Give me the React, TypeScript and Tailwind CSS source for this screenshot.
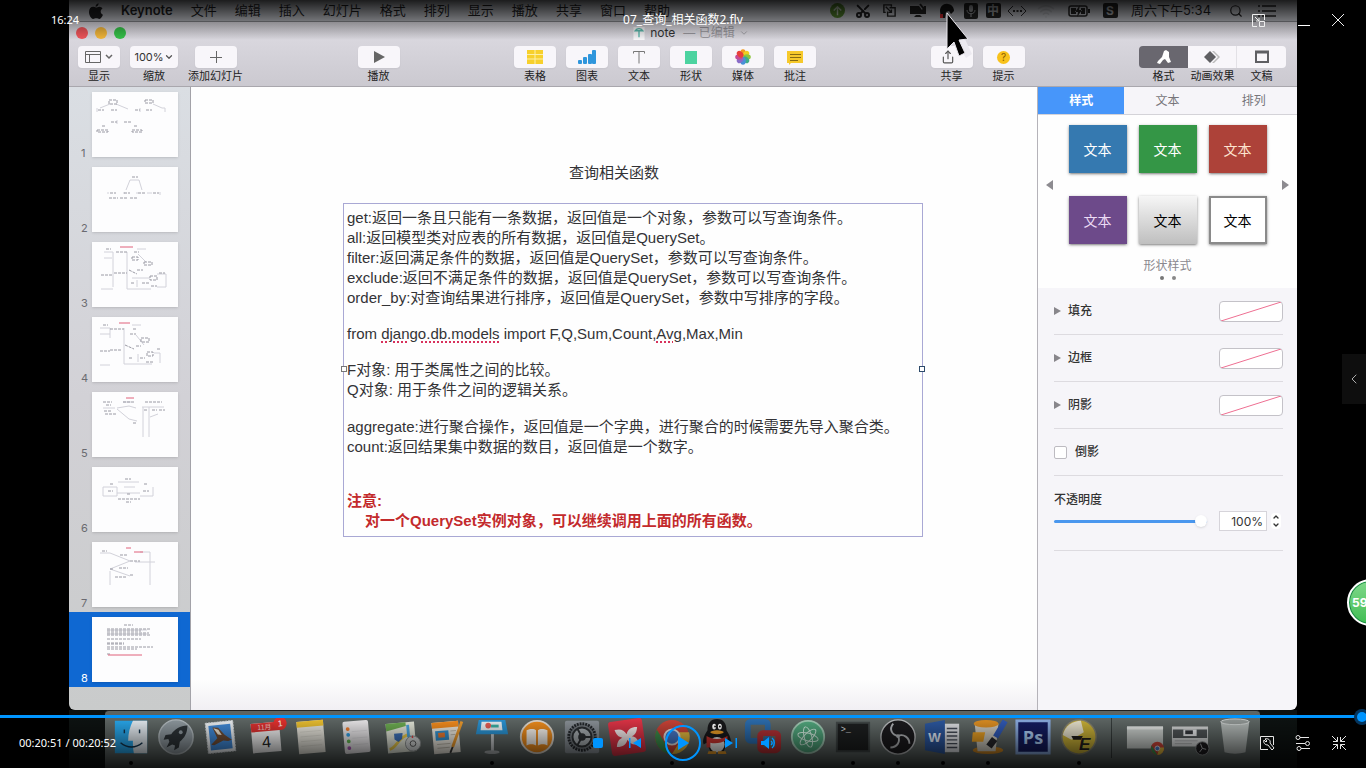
import type { ReactNode } from 'react'
import { ChevronDown, ChevronLeft, ChevronUp, Scissors, Search, Share, Wifi, X } from 'lucide-react'

const menus = ['文件', '编辑', '插入', '幻灯片', '格式', '排列', '显示', '播放', '共享', '窗口', '帮助']

const thumbs = [
  {
    ink: 'M17 8h8v4h-8zM53 8h8v3h-8zM6 18h6M19 18h6M43 18h5M54 18h6M19 30h6M32 30h7M10 34h3M42 34h3M5 38h11v2H5zM40 38h10v2H40z',
    lines: 'M18 12L8 16M24 12L36 17M61 12l9 4h3v4M5 16v4M48 16v4M25 28v4',
    red: '',
  },
  {
    ink: 'M40 10h6M18 26h6M32 26h6M46 26h7M61 26h6M17 31h9M28 31h8M38 31h8',
    lines: 'M38 13h9M38 13l-4 10M47 13l3 10M16 25v2M32 25v2M45 25v2M55 26h5M68 25v3',
    red: '',
  },
  {
    ink: 'M14 7h5M24 10h11M42 10h5M40 15h6v3h-6zM52 20h8v3h-8zM9 33h12M22 31h13M37 28l8 4M45 28h6M58 34h7v4h-7zM67 31h6M39 41h4M50 41h7M59 44h6',
    lines: 'M12 10h9v35M12 16h8M35 10v37h24M45 7h9M46 12l8 8M40 36h18M45 38v7M65 32h9v13h-9M9 47h12',
    red: 'M28 5h13',
  },
  {
    ink: 'M11 8h5M18 12h14M41 12h4M38 17h6M49 21h8v4h-8zM8 34h10M18 33h12M33 28l9 4M44 29h5M55 35h6v4h-6zM65 32h4M37 41h3M48 41h5M54 45h7',
    lines: 'M8 11h10v10M8 17h10M32 11v36h28M40 8h9M44 18l8 10M46 37v8M62 36h6v10M8 48h10',
    red: 'M27 6h11',
  },
  {
    ink: 'M11 10h9M31 10h11M53 10h17M14 13h5M12 19h7M13 22h12M52 18h4M60 18h5M67 18h6M41 31h3',
    lines: 'M11 16h12M31 10h8M25 17l12 10 8 2M25 16l12-2 7 2M50 15h22M51 15v30M57 15v30M58 25l8-3',
    red: 'M34 6h8',
  },
  {
    ink: 'M33 12h6M18 17h3M52 17h3M16 24h5M51 24h6M35 27h4M26 32h22M34 35h5',
    lines: 'M11 20h14v9H11zM26 15h21M32 20h11M25 26h23M48 29h13V20',
    red: '',
  },
  {
    ink: 'M10 9h5M28 13h7M42 19h6M27 26h9M23 35h11M38 19h3M38 33h3M18 27h3',
    lines: 'M8 11h10l20 8-20 8 20 7M48 10h10v33M43 20h20M18 29v14',
    red: 'M34 6h5M42 10h9',
  },
  {
    ink: 'M32 8h9M15 12h43M15 14h34M15 16h42M15 18h43M15 22h34M15 26h17M15 27h17M15 30h46M15 32h30M15 37h3',
    lines: 'M15 13h40M15 17h40',
    red: 'M16 38h34',
  },
]

const insertTools: { label: string; icon: ReactNode }[] = [
  {
    label: '表格',
    icon: (
      <svg viewBox="0 0 20 16" className="h-4 w-5">
        <path fill="#f7d02c" d="M2 1h16v14H2z" />
        <path stroke="#fdf0a8" d="M2 5.5h16M2 10h16M10 1v14" />
      </svg>
    ),
  },
  {
    label: '图表',
    icon: (
      <svg viewBox="0 0 20 16" className="h-4 w-5" fill="#2f96dc">
        <rect x="1" y="11" width="4" height="4" rx="1" />
        <rect x="6" y="8" width="4" height="7" rx="1" />
        <rect x="11" y="5" width="4" height="10" rx="1" />
        <rect x="15" y="1" width="4" height="14" rx="1" />
      </svg>
    ),
  },
  {
    label: '文本',
    icon: (
      <svg viewBox="0 0 20 16" className="h-4 w-5" fill="none" stroke="#777">
        <path d="M4.500 4.500V2.500h11v2M10 2.500v12" />
      </svg>
    ),
  },
  {
    label: '形状',
    icon: (
      <svg viewBox="0 0 20 16" className="h-4 w-5">
        <path fill="#4cd3a0" d="M4 2h12v13H4z" />
      </svg>
    ),
  },
  {
    label: '媒体',
    icon: (
      <svg viewBox="-8 -8 16 16" className="size-4">
        {['#f29a1f', '#f0d020', '#8fc640', '#3fae8a', '#4a90d9', '#8a6cc8', '#c74a94', '#e8403a'].map((c, i) => (
          <ellipse key={c} cx="0" cy="-4" rx="2.800" ry="3.800" fill={c} transform={`rotate(${i * 45})`} />
        ))}
      </svg>
    ),
  },
  {
    label: '批注',
    icon: (
      <svg viewBox="0 0 20 16" className="h-4 w-5">
        <path fill="#f6c92c" d="M2 2h16v12H6l-2 2v-2H2z" />
        <path stroke="#866a14" d="M5 5.500h11M5 8.500h11M5 11.500h8" />
      </svg>
    ),
  },
]

const swatches = [
  'bg-[#3579b0] text-white',
  'bg-[#349646] text-white',
  'bg-[#ad4239] text-[#fde4d0]',
  'bg-[#6d4a8a] text-[#ecdcf4]',
  'bg-linear-to-b from-[#f6f6f6] to-[#bfbfbf] text-black',
  'border-2 border-[#8a8a8a] bg-white text-black',
]

const dockApps: { name: string; running?: boolean; art: ReactNode }[] = [
  {
    name: 'Finder',
    running: true,
    art: (
      <>
        <path fill="#27a3e6" d="M3 3h34v34H3z" />
        <path fill="#dfe6ec" d="M22 3h15v34H23c-1-5-1-9-1-13h-5c0-8 2-15 5-21z" />
        <path d="M13 12v4M29 12v4M9 26c7 6 16 6 23 0" fill="none" stroke="#13324a" strokeWidth="1.500" />
      </>
    ),
  },
  {
    name: 'Launchpad',
    art: (
      <>
        <circle cx="20" cy="20" r="18" fill="#8b959b" stroke="#aeb6ba" strokeWidth="1.500" />
        <path fill="#2c3236" d="M32 8c-8 0-13 4-17 9l-6 1-2 5 5-1 1 3-3 6 6-3 3 1-1 5 5-3 1-6c5-4 8-9 8-17z" />
        <circle cx="25" cy="15" r="2" fill="#8b959b" />
      </>
    ),
  },
  {
    name: 'Mail',
    art: (
      <g transform="rotate(-6 20 20)">
        <path fill="#e9edf0" stroke="#d0d4d6" strokeDasharray="2 1" d="M5 4h29v32H5z" />
        <path fill="#3f86d2" d="M8 7h23v26H8z" />
        <path fill="#6d4b33" d="M12 9l6 1 6 8 7 6-4 1-5-1-10 4-3-1 7-6z" />
        <path fill="#eee3d0" d="M13 10l5 2 3 6-4-1z" />
      </g>
    ),
  },
  {
    name: 'Calendar',
    art: (
      <g transform="rotate(-5 20 20)">
        <path fill="#ececec" d="M5 5h30v31H5z" />
        <path fill="#d8302f" d="M5 5h30v9H5z" />
        <text x="20" y="31" textAnchor="middle" fontSize="17" fill="#222" fontFamily="Liberation Sans">4</text>
        <text x="19" y="12" textAnchor="middle" fontSize="7" fill="#f6c9c4" fontFamily="Noto Sans CJK SC">11月</text>
        <circle cx="36" cy="7" r="7" fill="#e0302c" />
        <text x="36" y="10" textAnchor="middle" fontSize="9" fill="#fff" fontFamily="Liberation Sans">1</text>
      </g>
    ),
  },
  {
    name: 'Notes',
    art: (
      <g transform="rotate(-5 20 20)">
        <path fill="#e3e1d8" d="M6 3h28v34H6z" />
        <path fill="#e7bd2f" d="M6 3h28v6H6z" />
        <path stroke="#d3d1c8" d="M9 14h22M9 19h22M9 24h22M9 29h22" />
      </g>
    ),
  },
  {
    name: 'Reminders',
    art: (
      <g transform="rotate(-5 20 20)">
        <rect x="7" y="3" width="27" height="34" rx="2" fill="#e6e4e6" />
        <circle cx="12" cy="11" r="2" fill="#ee7a2c" />
        <circle cx="12" cy="17" r="2" fill="#2f9be0" />
        <circle cx="12" cy="24" r="2" fill="#5fb04e" />
        <circle cx="12" cy="31" r="2" fill="#a855b0" />
        <path stroke="#d8d6d9" d="M16 14h16M16 21h16M16 28h16" />
      </g>
    ),
  },
  {
    name: 'Maps',
    art: (
      <g transform="rotate(-5 20 20)">
        <path fill="#dfe2d5" d="M5 5h30v31H5z" />
        <path fill="#6aa84f" d="M5 5h21v4L5 13z" />
        <path fill="none" stroke="#e8c84a" strokeWidth="3" d="M7 32c8-1 10-13 22-14" />
        <path fill="none" stroke="#4aa3dc" strokeWidth="3" d="M28 8v12l6 3" />
        <path fill="#3c6fb6" d="M13 16h9l-1 6-4 3-4-3z" />
        <circle cx="32" cy="28" r="8" fill="#cfd2d2" stroke="#8b8f8f" />
        <circle cx="32" cy="28" r="3" fill="none" stroke="#555" />
        <path fill="#d33" d="M31 22l1-3 1 3z" />
      </g>
    ),
  },
  {
    name: 'Pages',
    art: (
      <g transform="rotate(-5 20 20)">
        <path fill="#e8e4da" d="M5 4h28v33H5z" />
        <path fill="#f08a1d" d="M5 4h28v6H5z" />
        <path fill="#3490cc" d="M8 13h14v10H8z" />
        <path fill="#e8772e" d="M11 15h7v5h-7z" />
        <path stroke="#b9b4a8" d="M24 14h6M24 18h5M9 27h14M9 31h13" />
        <path stroke="#e8972b" strokeWidth="3" d="M37 5L25 31" />
        <path stroke="#333" strokeWidth="2" d="M25 31l-3 6" />
      </g>
    ),
  },
  {
    name: 'Keynote',
    running: true,
    art: (
      <>
        <path fill="#2990cf" d="M6 2h28l3 15H3z" />
        <path fill="#e9eef1" d="M9 4h21l1 9H8z" />
        <circle cx="16" cy="8" r="3" fill="#e05a50" />
        <path fill="#3aaca0" d="M19 7h8v3h-8z" />
        <path fill="#c2c6c8" d="M19 17h3v18h-3z" />
        <ellipse cx="20" cy="36" rx="8" ry="2" fill="#a9adaf" />
      </>
    ),
  },
  {
    name: 'iBooks',
    art: (
      <>
        <circle cx="20" cy="20" r="17" fill="#ea8a1c" stroke="#dcd5cb" strokeWidth="2" />
        <path fill="#f3efe9" d="M9 13c4-2 8-2 10 0v16c-3-2-7-2-10 0zM31 13c-4-2-8-2-10 0v16c3-2 7-2 10 0z" />
      </>
    ),
  },
  {
    name: '系统偏好设置',
    art: (
      <>
        <rect x="2" y="3" width="36" height="34" rx="2" fill="#878e94" />
        <circle cx="20" cy="20" r="14" fill="#6b7176" stroke="#22262a" strokeWidth="3" strokeDasharray="2 1" />
        <circle cx="20" cy="20" r="10" fill="#a1a7ab" stroke="#2a2e31" strokeWidth="2" />
        <path stroke="#2a2e31" strokeWidth="2" d="M20 20h10M20 20l-5-9M20 20l-5 9" />
        <circle cx="20" cy="20" r="4" fill="#2a2e31" />
      </>
    ),
  },
  {
    name: 'XMind',
    art: (
      <g transform="rotate(-8 20 20)">
        <rect x="2" y="2" width="36" height="36" rx="3" fill="#dc3345" />
        <path fill="#f4e9ea" d="M8 11c6-1 10 1 12 6 2-5 6-7 12-6-1 5-3 8-7 9 4 1 6 4 7 9-6 1-10-1-12-6-2 5-6 7-12 6 1-5 3-8 7-9-4-1-6-4-7-9z" />
        <circle cx="20" cy="20" r="3" fill="#f4e9ea" />
      </g>
    ),
  },
  {
    name: 'Chrome',
    running: true,
    art: (
      <>
        <circle cx="20" cy="20" r="18" fill="#c64236" />
        <path fill="#3c8a4a" d="M4 12l10 17 6 9A18 18 0 0 1 4 12z" />
        <path fill="#dcb43c" d="M38 15H24l4 10-8 13a18 18 0 0 0 18-23z" />
        <circle cx="20" cy="20" r="8" fill="#4575c4" stroke="#ddd" strokeWidth="2" />
      </>
    ),
  },
  {
    name: 'QQ',
    art: (
      <>
        <path fill="#17181a" d="M20 1c7 0 10 5 10 12 3 5 6 10 4 15l-3-2-4 9H13l-4-9-3 2c-2-5 1-10 4-15 0-7 3-12 10-12z" />
        <ellipse cx="20" cy="28" rx="8" ry="8" fill="#e4e4e2" />
        <path fill="#c8342f" d="M9 19c7 4 15 4 22 0v4c-7 4-14 4-18 3v5h-4z" />
        <ellipse cx="17" cy="9" rx="2" ry="3" fill="#fff" />
        <ellipse cx="23" cy="9" rx="2" ry="3" fill="#fff" />
        <circle cx="18" cy="9" r="1" fill="#111" />
        <circle cx="23" cy="9" r="1" fill="#111" />
        <ellipse cx="20" cy="15" rx="7" ry="2" fill="#e99b25" />
        <path fill="#e99b25" d="M11 35h8v3h-9zM21 35h8l1 3h-9z" />
      </>
    ),
  },
  {
    name: 'VMware Fusion',
    running: true,
    art: (
      <>
        <rect x="4" y="4" width="21" height="20" rx="3" fill="none" stroke="#2b6bab" strokeWidth="6" />
        <rect x="17" y="16" width="19" height="18" rx="3" fill="none" stroke="#b02f33" strokeWidth="6" />
      </>
    ),
  },
  {
    name: 'Atom',
    art: (
      <>
        <circle cx="20" cy="20" r="17" fill="#4fa37a" stroke="#9fc7b2" strokeWidth="2" />
        <g fill="none" stroke="#cfe9dc">
          <ellipse cx="20" cy="20" rx="11" ry="4" transform="rotate(15 20 20)" />
          <ellipse cx="20" cy="20" rx="11" ry="4" transform="rotate(75 20 20)" />
          <ellipse cx="20" cy="20" rx="11" ry="4" transform="rotate(135 20 20)" />
        </g>
      </>
    ),
  },
  {
    name: '终端',
    running: true,
    art: (
      <>
        <path fill="#1c1e1f" stroke="#3f4545" strokeWidth="2" d="M3 5h34v30H3z" />
        <text x="7" y="15" fontSize="9" fill="#dedede" fontFamily="Liberation Mono">&gt;_</text>
      </>
    ),
  },
  {
    name: 'OBS',
    running: true,
    art: (
      <>
        <circle cx="20" cy="20" r="18" fill="#1b1a1d" stroke="#b6b8ba" strokeWidth="1.500" />
        <path
          fill="none"
          stroke="#aeb0b3"
          strokeWidth="2"
          d="M15 6c-5 6-1 12 5 13M20 19c6-3 12 2 12 8M20 19c3 6-1 12-8 12"
        />
        <circle cx="20" cy="19" r="2" fill="#aeb0b3" />
      </>
    ),
  },
  {
    name: 'Word',
    running: true,
    art: (
      <>
        <path fill="#d8dade" d="M20 6h17v30H20z" />
        <path stroke="#444a55" strokeWidth="1.500" d="M24 11h11M24 15h11M24 19h11M24 23h11M24 27h11M24 31h11" />
        <path fill="#2b559b" d="M1 6l21-4v36L1 34z" />
        <text x="11" y="25" textAnchor="middle" fontSize="14" fontWeight="700" fill="#dfe7f4" fontFamily="Liberation Sans">W</text>
      </>
    ),
  },
  {
    name: 'Paintbrush',
    running: true,
    art: (
      <>
        <ellipse cx="20" cy="34" rx="16" ry="4" fill="#c98422" />
        <path fill="#c9c5ba" d="M6 6h25l-3 29H9z" />
        <ellipse cx="18" cy="6" rx="13" ry="4" fill="#d98c22" />
        <path fill="#e39b22" d="M4 15h13l-2 10H3z" />
        <path stroke="#2f57b0" strokeWidth="6" d="M38 3L28 20" />
        <path stroke="#26262a" strokeWidth="7" d="M27 22l-6 8" />
      </>
    ),
  },
  {
    name: 'Photoshop',
    art: (
      <>
        <path fill="#131b5c" stroke="#87a8dc" strokeWidth="3" d="M3 3h34v34H3z" />
        <text x="20" y="27" textAnchor="middle" fontSize="19" fontWeight="700" fill="#a9c8ee" fontFamily="Open Sans">Ps</text>
      </>
    ),
  },
  {
    name: 'UltraEdit',
    running: true,
    art: (
      <>
        <circle cx="20" cy="20" r="18" fill="#c3ab35" stroke="#7f7c6a" strokeWidth="1.500" />
        <path fill="#e2ddc8" d="M3 18C5 8 14 3 22 3l3 12-13 8z" />
        <path fill="#1e1c1a" d="M12 19h12l-2 4h-8z" />
        <text x="26" y="34" textAnchor="middle" fontSize="18" fontWeight="700" fontStyle="italic" fill="#211d1b" fontFamily="Liberation Sans">E</text>
      </>
    ),
  },
]

const dockWindows: { name: string; art: ReactNode }[] = [
  {
    name: 'Chrome 窗口',
    art: (
      <>
        <path fill="#c3c8c5" d="M1 9h38v23H1z" />
        <path fill="#e0e3e1" d="M1 9h38v3H1z" />
        <circle cx="33" cy="32" r="7" fill="#c64236" />
        <path fill="#dcb43c" d="M40 31h-5l-2 8a7 7 0 0 0 7-8z" />
        <path fill="#3c8a4a" d="M27 29l6 10a7 7 0 0 1-6-10z" />
        <circle cx="33" cy="32" r="2.500" fill="#4575c4" stroke="#ddd" />
      </>
    ),
  },
  {
    name: 'OBS 窗口',
    art: (
      <>
        <path fill="#cdd0d0" d="M1 9h38v21H1z" />
        <path fill="#4d5254" d="M2 12h36v9H2z" />
        <path fill="#e1e3e5" d="M13 12h14v7H13z" />
        <path fill="#33363a" d="M15 13h8v4h-8z" />
        <path stroke="#a5a8a9" d="M4 24h24M4 27h18" />
        <circle cx="33" cy="32" r="7" fill="#1b1a1d" stroke="#85888a" />
        <path stroke="#aeb0b3" d="M31 27l2 5 4 1M33 32l-3 4" fill="none" />
      </>
    ),
  },
  {
    name: '废纸篓',
    art: (
      <>
        <path fill="#a9afad" d="M5 4h30l-4 32c-6 2-16 2-22 0z" />
        <ellipse cx="20" cy="4" rx="15" ry="3" fill="#8d9391" stroke="#c7cbca" />
      </>
    ),
  },
]

function ToolButton({ label, wide, children }: { label: string; wide?: boolean; children: ReactNode }) {
  return (
    <button className="flex flex-col items-center text-[11px] leading-4 text-[#222]">
      <span
        className={`flex h-[22px] items-center justify-center rounded bg-[#f8f6fa] text-[#555] shadow-xs ${
          wide ? 'w-12' : 'w-[42px]'
        }`}
      >
        {children}
      </span>
      {label}
    </button>
  )
}

function MenuBar() {
  return (
    <header className="flex h-[22px] shrink-0 items-center justify-between border-b border-[#85878c] bg-[#b9bbc1] pr-[17px] pl-5 text-[13px] whitespace-nowrap text-[#1c1c1e]">
      <nav className="flex items-center gap-[18px]">
        <svg viewBox="0 0 16 18" className="h-4 w-[14px]" fill="#1c1c1e">
          <path d="M11 0c0 2-1.500 4-3.500 4C7.300 2 9 .3 11 0zM8 5c1 0 2-1 4-1 1.500 0 2.700.8 3.400 2-3 1.700-2.500 6 .6 7.200C15 15.500 13.500 18 12 18c-1.500 0-2-.8-3.700-.8S6 18 4.700 18C2.500 18 0 13.500 0 10c0-3.600 2.200-5.800 4.500-5.800C6 4.200 7.200 5 8 5z" />
        </svg>
        <strong className="font-semibold">Keynote</strong>
        {menus.map((m) => (
          <a key={m} href="#">
            {m}
          </a>
        ))}
      </nav>
      <div className="flex items-center [&>span]:flex [&>span]:justify-center">
        <span className="w-[26px]">
          <svg viewBox="0 0 16 16" className="size-[15px]">
            <circle cx="8" cy="8" r="8" fill="#4d7a2a" />
            <path d="M8 13V4M4 8l4-4 4 4" fill="none" stroke="#b4bfae" strokeWidth="1.500" />
          </svg>
        </span>
        <span className="w-[26px]">
          <Scissors size={16} strokeWidth={3} className="-rotate-90" />
        </span>
        <span className="w-[26px]">
          <svg viewBox="0 0 16 16" className="size-[15px]" fill="none" stroke="#222" strokeWidth="1.500">
            <path d="M10 4V2H2v8h2M8 5h6v9H6V9M4 4l6 6M10 7v3H7" />
          </svg>
        </span>
        <span className="w-8">
          <svg viewBox="0 0 18 16" className="h-4 w-[18px]" fill="#222">
            <path d="M1 3h9l3 4 2-4h2v8H1zM7 12h4l2 2H5z" />
            <path d="M11 1l4 5" stroke="#222" strokeWidth="2" />
          </svg>
        </span>
        <span className="w-[26px]">
          <svg viewBox="0 0 16 16" className="size-4" fill="#161616">
            <path d="M1 8c0-5 4-8 8-7 4 0 6 4 6 7l-3 3-2-3-3 1-1 6H2z" />
            <path fill="#c8282c" d="M1 11h3v4H1z" />
          </svg>
        </span>
        <span className="w-[22px]">
          <svg viewBox="0 0 16 16" className="size-4">
            <rect x="1" width="14" height="16" rx="2" fill="#222" />
            <rect x="6" y="2" width="4" height="7" rx="2" fill="#a5a7ab" />
            <path d="M4 7c0 5 8 5 8 0M8 11v3" fill="none" stroke="#a5a7ab" />
          </svg>
        </span>
        <span className="w-[22px]">
          <span className="w-[15px] rounded-xs bg-[#222] text-center text-[12px] leading-[15px] font-bold text-[#a5a7ab]">中</span>
        </span>
        <span className="w-[26px]">
          <svg viewBox="0 0 20 14" className="h-[14px] w-5" fill="none" stroke="#2a2a2c">
            <path d="M6 2L1 7l5 5M14 2l5 5-5 5" />
            <path d="M6 7h9" strokeWidth="2" strokeDasharray="2 1.500" />
          </svg>
        </span>
        <span className="w-8 opacity-10">
          <Wifi size={18} />
        </span>
        <span className="w-[34px]">
          <svg viewBox="0 0 22 12" className="h-3 w-[22px]">
            <rect x="1" y="1" width="18" height="10" rx="2" fill="none" stroke="#222" strokeWidth="1.500" />
            <path d="M3 3h5v6H3zM13 3h4v6h-4zM20 4h2v4h-2zM12 0L7 7h3l-1 5 5-7h-3z" fill="#222" />
          </svg>
        </span>
        <span className="w-7">
          <span className="w-[15px] rounded-xs bg-[#222] text-center text-[12px] leading-[15px] font-bold text-[#a5a7ab]">S</span>
        </span>
        <span className="w-[94px]">周六下午5:34</span>
        <span className="w-9">
          <Search size={14} />
        </span>
        <span className="w-[26px]">
          <svg viewBox="0 0 18 12" className="h-3 w-[18px]" stroke="#222" strokeWidth="1.500">
            <path d="M0 1h2M4 1h14M0 6h2M4 6h14M0 11h2M4 11h14" />
          </svg>
        </span>
      </div>
    </header>
  )
}

function Toolbar() {
  return (
    <div className="shrink-0 border-b border-[#a9a7ad] bg-linear-to-b from-[#dedce3] to-[#cbc9d0]">
      <div className="relative flex h-[22px] items-center justify-center text-[12px] text-[#333]">
        <div className="absolute left-[7px] flex gap-[7px]">
          <button aria-label="关闭" className="size-3 rounded-full bg-[#f0555a]" />
          <button aria-label="最小化" className="size-3 rounded-full bg-[#f2b63a]" />
          <button aria-label="缩放" className="size-3 rounded-full bg-[#35c148]" />
        </div>
        <div className="flex items-center gap-1 pl-4">
          <svg viewBox="0 0 12 14" className="h-[13px] w-3">
            <path fill="#f5f5f7" d="M0 0h12v14H0z" />
            <path d="M2 4c2-3 6-3 8 0H2zM6 4v7" fill="none" stroke="#5bb8ac" strokeWidth="1.500" />
          </svg>
          <span className="pl-px">note</span>
          <span className="flex items-center pl-1 text-[#99979d]">
            — 已编辑 <ChevronDown size={10} className="ml-1" />
          </span>
        </div>
      </div>
      <div className="flex h-[42px] items-start justify-between pt-[2px] pr-[11px] pl-[9px] whitespace-nowrap">
        <div className="flex gap-[10px]">
          <ToolButton label="显示">
            <svg viewBox="0 0 28 14" className="h-[14px] w-7" fill="none" stroke="#666">
              <path d="M.5 1.500h15v11H.5zM.5 4.500h15M4.500 4.500v8" />
              <path d="M21 5l3 3 3-3" strokeWidth="1.500" />
            </svg>
          </ToolButton>
          <ToolButton label="缩放" wide>
            <span className="text-[11px] text-[#333]">100%</span>
            <ChevronDown size={10} strokeWidth={3} />
          </ToolButton>
          <ToolButton label="添加幻灯片">
            <svg viewBox="0 0 14 14" className="size-[14px]" stroke="#666">
              <path d="M1 7.500h12M7.500 1v12" />
            </svg>
          </ToolButton>
        </div>
        <ToolButton label="播放">
          <svg viewBox="0 0 12 12" className="size-3" fill="#666">
            <path d="M1 0l11 6-11 6z" />
          </svg>
        </ToolButton>
        <div className="flex gap-[10px]">
          {insertTools.map((t) => (
            <ToolButton key={t.label} label={t.label}>
              {t.icon}
            </ToolButton>
          ))}
        </div>
        <div className="flex gap-[10px]">
          <ToolButton label="共享">
            <Share size={14} strokeWidth={2} className="mr-2" />
          </ToolButton>
          <ToolButton label="提示">
            <span className="size-[13px] rounded-full bg-[#f8c21c] text-center text-[10px] leading-[13px] text-[#8a5c00]">?</span>
          </ToolButton>
        </div>
        <div className="flex text-center text-[11px] leading-4 text-[#222]">
          <button className="w-[49px]">
            <span className="flex h-[22px] items-center justify-center rounded-l bg-[#69676f]">
              <svg viewBox="0 0 16 16" className="size-4" fill="#fff">
                <path d="M8 2l2-1 3 2v5l2 5-3 1-3-4-2 1-3 4-3-1 1-2 4-4z" />
              </svg>
            </span>
            格式
          </button>
          <button className="w-[49px]">
            <span className="flex h-[22px] items-center justify-center border-r border-[#e3e1e6] bg-[#f8f6fa]">
              <svg viewBox="0 0 18 12" className="h-3 w-[18px]">
                <path d="M9 0h2l6 6-6 6H9l6-6z" fill="#bbb" />
                <path d="M7 0l6 6-6 6-6-6z" fill="#5f5f63" />
              </svg>
            </span>
            动画效果
          </button>
          <button className="w-[49px]">
            <span className="flex h-[22px] items-center justify-center rounded-r bg-[#f8f6fa]">
              <svg viewBox="0 0 16 14" className="h-[14px] w-4" fill="none" stroke="#5f5f63" strokeWidth="2">
                <path d="M2 2h12v10H2z" />
                <path d="M1 2h14" strokeWidth="3" />
              </svg>
            </span>
            文稿
          </button>
        </div>
      </div>
    </div>
  )
}

function Sidebar() {
  return (
    <aside className="w-[122px] shrink-0 overflow-hidden border-r border-[#a3a2a8] bg-linear-to-b from-[#dadee3] via-[#d2d1d6] to-[#c9cbcb]">
      <ol>
        {thumbs.map((t, i) => (
          <li
            key={i}
            className={`flex h-[75px] items-end gap-1 pb-1 pl-3 text-[11px] ${
              i === thumbs.length - 1 ? 'bg-[#0f68d2] text-white' : 'text-[#6a6a70]'
            }`}
          >
            <span className="w-[7px] leading-[9px]">{i + 1}</span>
            <svg viewBox="0 0 86 65" className="mb-px h-[65px] w-[86px] bg-[#fdfdfe] shadow-sm" fill="none">
              <path d={t.lines} stroke="#d2d2da" />
              <path d={t.ink} stroke="#9a9aa4" strokeDasharray="3 1" />
              <path d={t.red} stroke="#e0607a" />
            </svg>
          </li>
        ))}
      </ol>
    </aside>
  )
}

function Slide() {
  return (
    <main className="min-w-0 flex-1 bg-linear-to-b from-[#fefefe] from-95% to-[#f1eff3] pt-[76px] font-['Liberation_Sans','Noto_Sans_CJK_SC',sans-serif] text-[15px] leading-5 text-[#333336]">
      <div className="mx-auto w-[618px]">
        <h1 className="text-center">查询相关函数</h1>
        <div className="relative mt-5 ml-[38px] border border-[#a9a8d4] px-[3px] pt-1 pb-[5px] whitespace-nowrap">
          <p>get:返回一条且只能有一条数据，返回值是一个对象，参数可以写查询条件。</p>
          <p>all:返回模型类对应表的所有数据，返回值是QuerySet。</p>
          <p>filter:返回满足条件的数据，返回值是QuerySet，参数可以写查询条件。</p>
          <p>exclude:返回不满足条件的数据，返回值是QuerySet，参数可以写查询条件。</p>
          <p>order_by:对查询结果进行排序，返回值是QuerySet，参数中写排序的字段。</p>
          <p className="mt-[17px] leading-[18px]">
            from{' '}
            <span className="underline decoration-[#d8325c] decoration-dotted decoration-2 underline-offset-2">
              django.db.models
            </span>{' '}
            import F,Q,Sum,Count,
            <span className="underline decoration-[#d8325c] decoration-dotted decoration-2 underline-offset-2">Avg</span>
            ,Max,Min
          </p>
          <p className="mt-[17px]">F对象: 用于类属性之间的比较。</p>
          <p>Q对象: 用于条件之间的逻辑关系。</p>
          <p className="mt-[17px]">aggregate:进行聚合操作，返回值是一个字典，进行聚合的时候需要先导入聚合类。</p>
          <p>count:返回结果集中数据的数目，返回值是一个数字。</p>
          <div className="mt-[34px] font-bold text-[#c32a2c]">
            <p>注意:</p>
            <p className="pl-[18px]">对一个QuerySet实例对象，可以继续调用上面的所有函数。</p>
          </div>
          <span className="absolute top-1/2 -left-[3px] size-[6px] -translate-y-1 border border-[#777] bg-white" />
          <span className="absolute top-1/2 -right-[3px] size-[6px] -translate-y-1 border border-[#2d4a6a] bg-white" />
        </div>
      </div>
    </main>
  )
}

function Inspector() {
  return (
    <aside className="w-[260px] shrink-0 border-l border-[#b5b3b9] bg-[#f6f5f9] text-[12px] text-[#333]">
      <div className="grid h-7 grid-cols-3 border-b border-[#d4d3d8] text-[#77757b]">
        <button className="bg-[#4796fa] font-bold text-white">样式</button>
        <button>文本</button>
        <button>排列</button>
      </div>
      <section className="bg-[#fefefe] pt-[10px] pb-2">
        <div className="flex items-center justify-between px-2">
          <button aria-label="上一页">
            <svg viewBox="0 0 7 10" className="h-[10px] w-[7px]" fill="#8d8b90">
              <path d="M7 0v10L0 5z" />
            </svg>
          </button>
          <div className="grid grid-cols-3 gap-x-3 gap-y-[23px]">
            {swatches.map((s) => (
              <button key={s} className={`h-12 w-[58px] text-[14px] shadow-sm shadow-black/40 ${s}`}>
                文本
              </button>
            ))}
          </div>
          <button aria-label="下一页">
            <svg viewBox="0 0 7 10" className="h-[10px] w-[7px]" fill="#8d8b90">
              <path d="M0 0v10l7-5z" />
            </svg>
          </button>
        </div>
        <p className="mt-[14px] text-center leading-4 text-[#8a888e]">形状样式</p>
        <div className="mt-[2px] flex justify-center gap-2">
          <span className="size-1 rounded-full bg-[#777]" />
          <span className="size-1 rounded-full bg-[#888]" />
        </div>
      </section>
      <div className="pr-[14px] pl-4 [&>*]:border-b [&>*]:border-[#dddbe0]">
        {['填充', '边框', '阴影'].map((label) => (
          <div key={label} className="flex h-[47px] items-center justify-between">
            <button className="flex items-center gap-[7px] font-medium">
              <svg viewBox="0 0 7 8" className="h-2 w-[7px]" fill="#88868b">
                <path d="M0 0v8l7-4z" />
              </svg>
              {label}
            </button>
            <button aria-label={`${label}颜色`} className="h-[21px] w-16 rounded-sm border border-[#c4c2c8] bg-white">
              <svg viewBox="0 0 62 19" className="block h-[19px] w-full" preserveAspectRatio="none">
                <path d="M1 19L61 0" stroke="#ee6f92" />
              </svg>
            </button>
          </div>
        ))}
        <label className="flex h-[47px] items-center gap-2 font-medium">
          <input type="checkbox" className="size-[13px] appearance-none rounded-xs border border-[#bdbbc1] bg-white" />
          倒影
        </label>
        <div className="pt-4 pb-[18px]">
          <label htmlFor="opacity" className="block leading-4 font-medium">
            不透明度
          </label>
          <div className="mt-[2px] flex h-[22px] items-center">
            <input
              id="opacity"
              type="range"
              defaultValue={100}
              className="h-[3px] min-w-0 flex-1 appearance-none rounded-full bg-[#4a97ee] [&::-webkit-slider-thumb]:size-3 [&::-webkit-slider-thumb]:appearance-none [&::-webkit-slider-thumb]:rounded-full [&::-webkit-slider-thumb]:bg-white [&::-webkit-slider-thumb]:shadow-sm"
            />
            <input
              aria-label="不透明度数值"
              defaultValue="100%"
              className="ml-3 h-5 w-12 border border-[#d6d4da] bg-white pr-[3px] text-right"
            />
            <div className="mr-[2px] ml-1 flex w-[10px] flex-col items-center rounded bg-white">
              <button aria-label="增加">
                <ChevronUp size={8} strokeWidth={4} />
              </button>
              <button aria-label="减少">
                <ChevronDown size={8} strokeWidth={4} />
              </button>
            </div>
          </div>
        </div>
      </div>
    </aside>
  )
}

function DockIcon({ name, running, children }: { name: string; running?: boolean; children: ReactNode }) {
  return (
    <button aria-label={name} className="flex flex-1 flex-col items-center">
      <svg viewBox="0 0 40 40" className="size-[38px] overflow-visible">
        {children}
      </svg>
      {running && <span className="mt-[5px] size-1 rounded-full bg-black" />}
    </button>
  )
}

function Dock() {
  return (
    <footer className="h-[58px] shrink-0 bg-[#0d1211] pr-[37px] pl-9">
      <div className="flex h-full items-start rounded-t border-t border-[#222] bg-[#5d6563] px-[3px] pt-[7px]">
        <div className="flex flex-1">
          {dockApps.map((a) => (
            <DockIcon key={a.name} name={a.name} running={a.running}>
              {a.art}
            </DockIcon>
          ))}
        </div>
        <div className="mx-[10px] h-10 w-px bg-[#343a39]" />
        <div className="flex w-[135px]">
          {dockWindows.map((w) => (
            <DockIcon key={w.name} name={w.name}>
              {w.art}
            </DockIcon>
          ))}
        </div>
      </div>
    </footer>
  )
}

function PlayerTop() {
  return (
    <div className="absolute inset-x-0 top-0 grid h-10 grid-cols-3 items-center px-5 font-['Noto_Sans','Noto_Sans_CJK_SC',sans-serif] text-[12px] text-white">
      <time className="pl-[31px] text-[11px]">16:24</time>
      <span className="text-center">07_查询_相关函数2.flv</span>
      <div className="flex items-center justify-end gap-5">
        <button aria-label="小窗播放" className="mr-3">
          <svg viewBox="0 0 15 15" className="size-[15px]" fill="none" stroke="#eee">
            <path d="M6 13.500H1.500v-12h12V7M4 4l4 4M8 5v3H5M8.500 8.500h5v5h-5z" />
          </svg>
        </button>
        <button aria-label="最小化播放器" className="mt-[10px] h-px w-3 bg-white" />
        <button aria-label="关闭播放器">
          <svg viewBox="0 0 16 16" className="size-4" stroke="#eee">
            <path d="M2 2l12 12M14 2L2 14" />
          </svg>
        </button>
      </div>
    </div>
  )
}

function PlayerControls() {
  return (
    <div className="absolute inset-x-0 bottom-0">
      <div className="relative h-[3px] bg-[#0095ff]">
        <span className="absolute -top-[6px] -right-1 flex size-4 items-center justify-center rounded-full bg-[#04355e]">
          <span className="size-[10px] rounded-full bg-[#0095ff]" />
        </span>
      </div>
      <div className="grid h-[50px] grid-cols-3 items-center px-[19px]">
        <span className="font-['Noto_Sans','Noto_Sans_CJK_SC',sans-serif] text-[11px] text-white">00:20:51 / 00:20:52</span>
        <div className="flex items-center justify-center gap-6 text-[#0095ff]">
          <button aria-label="停止" className="flex w-[14px] justify-center">
            <span className="size-[10px] rounded-xs bg-current" />
          </button>
          <button aria-label="上一个">
            <svg viewBox="0 0 12 12" className="size-3" fill="currentColor">
              <path d="M0 1h1.500v10H0zM12 1v10L4 6z" />
            </svg>
          </button>
          <button aria-label="播放视频" className="flex size-9 items-center justify-center rounded-full border-2 border-current">
            <svg viewBox="0 0 12 14" className="h-[14px] w-3" fill="currentColor">
              <path d="M1 0l11 7-11 7z" />
            </svg>
          </button>
          <button aria-label="下一个">
            <svg viewBox="0 0 12 12" className="size-3" fill="currentColor">
              <path d="M10.500 1H12v10h-1.500zM0 1v10l8-5z" />
            </svg>
          </button>
          <button aria-label="音量">
            <svg viewBox="0 0 14 12" className="h-3 w-[14px]" fill="currentColor">
              <path d="M0 4h3l5-4v12L3 8H0z" />
              <path d="M10 4c1.500 1 1.500 3 0 4M11 1c3 2 3 8 0 10" fill="none" stroke="currentColor" strokeWidth="1.500" />
            </svg>
          </button>
        </div>
        <div className="flex justify-end gap-5 text-[#e6e6e6]">
          <button aria-label="工具">
            <svg viewBox="0 0 16 16" className="size-4" fill="none" stroke="currentColor">
              <path d="M9 14.500H1.500v-13h13V10" />
              <path d="M6 4c3-1 6 1 5 4l4 5-2 2-4-5C6 10 4 8 5 5l2 2 1-1z" />
            </svg>
          </button>
          <button aria-label="设置">
            <svg viewBox="0 0 16 16" className="size-4" fill="none" stroke="currentColor">
              <path d="M5 2.500h9M1 8.500h9M6 13.500h9" />
              <circle cx="3" cy="2.500" r="2" />
              <circle cx="12.500" cy="8.500" r="2" />
              <circle cx="4" cy="13.500" r="2" />
            </svg>
          </button>
          <button aria-label="退出全屏">
            <svg viewBox="0 0 16 16" className="size-4" fill="none" stroke="currentColor">
              <path d="M1 1l5.500 5.500M15 1L9.500 6.500M1 15l5.500-5.500M15 15L9.500 9.500M2 6.500h4.500V2M14 6.500H9.500V2M2 9.500h4.500V14M14 9.500H9.500V14" />
            </svg>
          </button>
        </div>
      </div>
    </div>
  )
}

export default function App() {
  return (
    <div className="relative h-screen overflow-hidden bg-black font-['Inter','Noto_Sans_CJK_SC',sans-serif]">
      <div className="flex h-full flex-col px-[69px]">
        <MenuBar />
        <div className="flex min-h-0 flex-1 flex-col overflow-hidden rounded-b-md">
          <Toolbar />
          <div className="flex min-h-0 flex-1">
            <Sidebar />
            <Slide />
            <Inspector />
          </div>
        </div>
        <Dock />
      </div>

      <div className="pointer-events-none absolute inset-x-0 top-0 h-10 bg-linear-to-b from-black/85 via-black/40 to-transparent" />
      <div className="pointer-events-none absolute inset-x-0 bottom-0 h-[50px] bg-linear-to-t from-black/80 to-transparent" />

      <svg viewBox="0 0 32 54" className="pointer-events-none absolute top-3 left-[945px] h-[54px] w-8">
        <path d="M12 28l7-3 8 17-6 4-9-14z" fill="#eceaf0" />
        <path d="M2 1v36l7-7 5 14 6-3-6-13 9-1z" fill="#000" stroke="#e8e6ec" />
      </svg>

      <PlayerTop />
      <PlayerControls />

      <button aria-label="展开列表" className="absolute top-[354px] right-0 flex h-[50px] w-6 items-center justify-center bg-[#0e0e0e] text-white">
        <ChevronLeft size={16} strokeWidth={1} />
      </button>
      <div className="absolute top-[579px] -right-7 flex size-[47px] items-center rounded-full border-2 border-white bg-linear-to-b from-[#7fd88a] to-[#3dbd52] pl-[3px] text-[12px] font-bold text-white ring-1 ring-[#1c8a48] ring-inset">
        59
      </div>
    </div>
  )
}
